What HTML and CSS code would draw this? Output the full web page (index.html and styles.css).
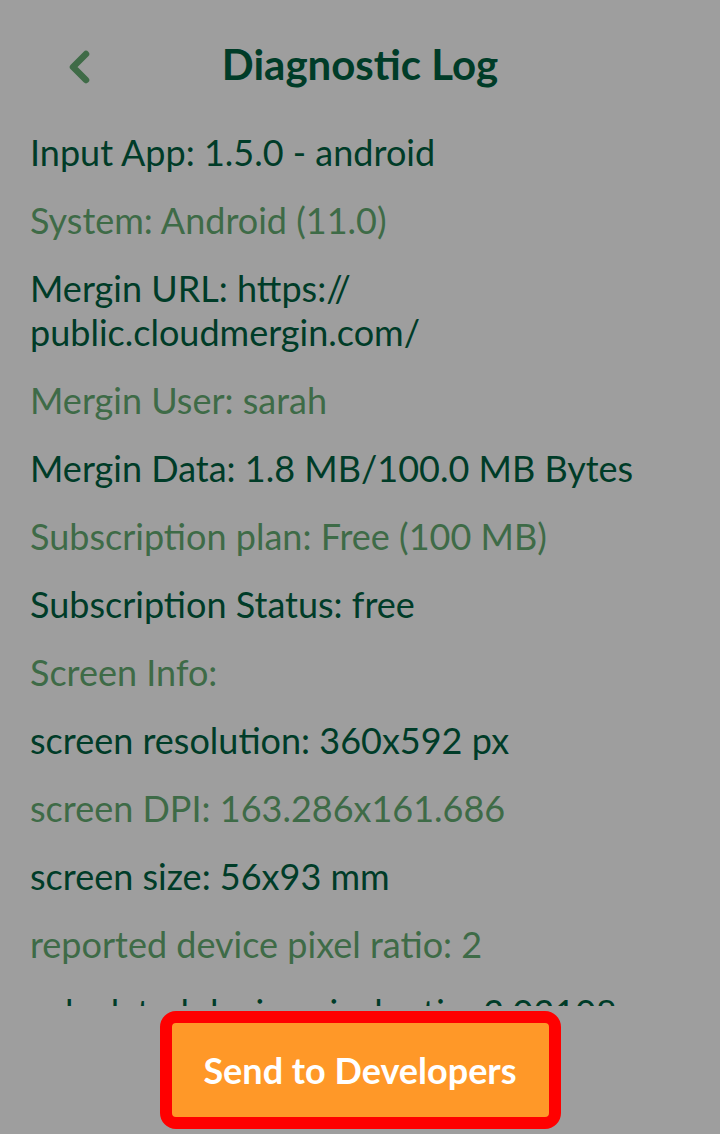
FILE: index.html
```html
<!DOCTYPE html>
<html>
<head>
<meta charset="utf-8">
<link rel="stylesheet" href="styles.css">
</head>
<body>
<div class="page">
  <header class="header">
    <button class="back" aria-label="Back">
      <svg width="40" height="40" viewBox="0 0 40 40"><path d="M26 8 L13 21 L26 34" fill="none" stroke="#3f6b47" stroke-width="6.5" stroke-linecap="round" stroke-linejoin="round"/></svg>
    </button>
    <h1 class="title">Diagnostic Log</h1>
  </header>
  <div class="log">
    <div class="row dark">Input App: 1.5.0 - android</div>
    <div class="row light">System: Android (11.0)</div>
    <div class="row dark">Mergin URL: https://<br>public.cloudmergin.com/</div>
    <div class="row light">Mergin User: sarah</div>
    <div class="row dark">Mergin Data: 1.8 MB/100.0 MB Bytes</div>
    <div class="row light">Subscription plan: Free (100 MB)</div>
    <div class="row dark">Subscription Status: free</div>
    <div class="row light">Screen Info:</div>
    <div class="row dark">screen resolution: 360x592 px</div>
    <div class="row light">screen DPI: 163.286x161.686</div>
    <div class="row dark">screen size: 56x93 mm</div>
    <div class="row light">reported device pixel ratio: 2</div>
    <div class="row dark">calculated device pixel ratio: 2.02108</div>
    <div class="row light">used dp scale: 1</div>
  </div>
  <footer class="footer">
    <button class="send">Send to Developers</button>
  </footer>
</div>
</body>
</html>
```
FILE: styles.css
```css
html, body {
  margin: 0;
  padding: 0;
}
body {
  background: #9e9e9e;
  font-family: Lato, "Open Sans", sans-serif;
}
.page {
  height: 1134px;
  display: flex;
  flex-direction: column;
}
.header {
  height: 130px;
  flex: none;
  display: flex;
  align-items: center;
  justify-content: center;
  position: relative;
}
.back {
  position: absolute;
  left: 60px;
  top: 46px;
  width: 40px;
  height: 40px;
  padding: 0;
  border: 0;
  background: none;
}
.back svg {
  display: block;
}
.title {
  margin: 0 0 2px 0;
  font-size: 42px;
  font-weight: 700;
  color: #003c28;
  line-height: 1;
}
.log {
  flex: none;
  height: 876px;
  overflow: hidden;
  padding: 0 30px;
  display: flex;
  flex-direction: column;
  gap: 24px;
}
.row {
  font-size: 36px;
  line-height: 44px;
  flex: none;
}
.dark {
  color: #003c28;
}
.light {
  color: #3e6b47;
}
.footer {
  flex: 1;
  display: flex;
  justify-content: center;
  padding-top: 5px;
}
.send {
  width: 401px;
  height: 118px;
  border: 12px solid #ff0000;
  border-radius: 16px;
  background: #ff9828;
  color: #ffffff;
  font-family: Lato, "Open Sans", sans-serif;
  font-weight: 700;
  font-size: 36px;
  padding: 0;
  box-sizing: border-box;
}
```
